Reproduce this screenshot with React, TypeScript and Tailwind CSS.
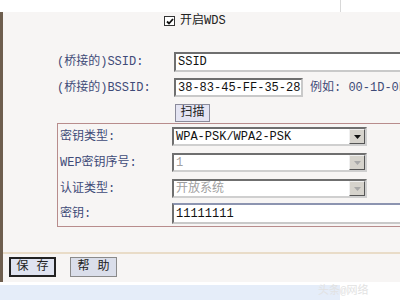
const font = "font-['Liberation_Mono','Noto_Sans_CJK_SC',monospace]";

function Field({ children, className }: { children?: React.ReactNode; className?: string }) {
  return (
    <div
      className={`flex shrink-0 items-center whitespace-nowrap border-2 border-t-[#6f6f6f] border-l-[#6f6f6f] border-b-[#c9c9c9] border-r-[#c9c9c9] bg-white pl-[2px] text-[12px] text-[#111] ${className ?? ""}`}
    >
      {children}
    </div>
  );
}

function Select({ value, disabled }: { value: string; disabled?: boolean }) {
  return (
    <div className="flex h-[19px] w-[195px] shrink-0 items-center border-2 border-t-[#6f6f6f] border-l-[#6f6f6f] border-b-[#cfcfcf] border-r-[#cfcfcf] bg-white text-[12px]">
      <span className={`flex-1 whitespace-nowrap pl-[2px] ${disabled ? "text-[#a0a0a0]" : "text-[#111]"}`}>{value}</span>
      <div className="flex h-[15px] w-[16px] items-center justify-center border border-t-[#f0f0f0] border-l-[#f0f0f0] border-b-[#555] border-r-[#555] bg-[#d6d3cc]">
        <svg width="7" height="4" viewBox="0 0 7 4">
          <path d="M0 0h7L3.5 4z" fill={disabled ? "#a8a8a8" : "#111"} />
        </svg>
      </div>
    </div>
  );
}

function LabelCell({ children, w, pl }: { children: React.ReactNode; w: string; pl: string }) {
  return (
    <div className={`shrink-0 whitespace-nowrap ${w} ${pl} text-[12px] text-[#3f4b78]`}>{children}</div>
  );
}

export default function App() {
  return (
    <div className={`relative h-[300px] w-[400px] overflow-hidden bg-white ${font}`}>
      <div className="h-[12px] w-[341px] border-r border-[#d8d8d8] bg-white" />
      <div className="flex h-[270px] w-[600px] flex-col items-start border-l-[3px] border-[#6e5e4e] bg-[#f7f5f4]">
        <div className="mt-[2px] flex h-[14px] items-center gap-[5px] pl-[161px]">
          <div className="flex h-[10px] w-[11px] items-center justify-center border border-[#333] bg-white">
            <svg width="8" height="7" viewBox="0 0 8 7">
              <path d="M1 3.5l2 2L7 1" stroke="#111" strokeWidth="1.8" fill="none" />
            </svg>
          </div>
          <span className="text-[12px] text-[#222]">开启WDS</span>
        </div>

        <div className="mt-[24px] flex h-[20px] items-center">
          <LabelCell w="w-[171px]" pl="pl-[54px]">(桥接的)SSID:</LabelCell>
          <Field className="h-[20px] w-[260px]">SSID</Field>
        </div>

        <div className="mt-[6px] flex h-[19px] items-center">
          <LabelCell w="w-[171px]" pl="pl-[54px]">(桥接的)BSSID:</LabelCell>
          <Field className="h-[19px] w-[129px]">38-83-45-FF-35-28</Field>
          <span className="ml-[7px] whitespace-nowrap text-[12px] text-[#3f4b78]">例如: 00-1D-0F-11-22-33</span>
        </div>

        <div className="mt-[7px] flex h-[18px] pl-[172px]">
          <div className="flex h-[18px] w-[35px] items-center justify-center border border-[#8a8a9a] bg-[#e4e4f2] text-[12px] text-[#222]">
            扫描
          </div>
        </div>

        <div className="ml-[54px] mt-[1px] flex h-[104px] w-[360px] shrink-0 flex-col border-[1.5px] border-[#b88c8c]">
          <div className="mt-[3px] flex h-[19px] items-center">
            <LabelCell w="w-[114px]" pl="pl-[2px]">密钥类型:</LabelCell>
            <Select value="WPA-PSK/WPA2-PSK" />
          </div>
          <div className="mt-[7px] flex h-[19px] items-center">
            <LabelCell w="w-[114px]" pl="pl-[2px]">WEP密钥序号:</LabelCell>
            <Select value="1" disabled />
          </div>
          <div className="mt-[7px] flex h-[19px] items-center">
            <LabelCell w="w-[114px]" pl="pl-[2px]">认证类型:</LabelCell>
            <Select value="开放系统" disabled />
          </div>
          <div className="mt-[5px] flex h-[21px] items-center">
            <LabelCell w="w-[114px]" pl="pl-[2px]">密钥:</LabelCell>
            <Field className="h-[21px] w-[250px] border-t-[#8c94b0]">11111111</Field>
          </div>
        </div>

        <div className="mt-[25px] h-[2px] w-full bg-[#e9dcc8]" />

        <div className="mt-[3px] flex h-[20px] items-center gap-[14px] pl-[6px]">
          <div className="flex h-[20px] w-[47px] items-center justify-center gap-[8px] border-2 border-[#222] bg-[#dfe3f0] text-[12px] text-[#222]">
            <span>保</span>
            <span>存</span>
          </div>
          <div className="flex h-[20px] w-[47px] items-center justify-center gap-[8px] border-[1.5px] border-[#8a8a8a] bg-[#dadeea] text-[12px] text-[#222]">
            <span>帮</span>
            <span>助</span>
          </div>
        </div>
      </div>
      <div className="mt-[3px] flex h-[15px]">
        <div className="h-[15px] w-[340px] bg-[#e5edf9]" />
        <div className="flex-1 bg-white" />
      </div>
      <span className="absolute left-[318px] top-[283px] text-[11px] text-[#e2e2e2]">头条@网络</span>
    </div>
  );
}
